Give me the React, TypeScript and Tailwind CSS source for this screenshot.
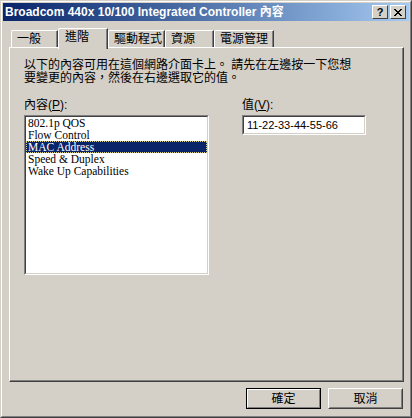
import React from "react";

const items = ["802.1p QOS", "Flow Control", "MAC Address", "Speed & Duplex", "Wake Up Capabilities"];

function Tab({ label, w, selected }: { label: string; w: string; selected?: boolean }) {
  if (selected) {
    return (
      <div className={`${w} h-[21px] -mb-[2px] relative z-10 flex`}>
        <div className="flex-1 border-l border-t border-white rounded-tl-[2px] bg-[#d4d0c8] border-r border-r-[#404040]">
          <div className="h-full border-r border-[#808080] pl-[6px] pt-[1px] leading-[14px] text-[12px]">{label}</div>
        </div>
      </div>
    );
  }
  return (
    <div className={`${w} h-[17px] flex`}>
      <div className="flex-1 border-l border-t border-white rounded-tl-[2px] border-r border-r-[#404040]">
        <div className="h-full border-r border-[#808080] pl-[5px] pt-[1px] leading-[14px] text-[12px]">{label}</div>
      </div>
    </div>
  );
}

export default function App() {
  return (
    <div className="w-[412px] h-[418px] bg-[#d4d0c8] border border-t-[#d4d0c8] border-l-[#d4d0c8] border-r-[#404040] border-b-[#404040] font-['Liberation_Sans','Noto_Sans_CJK_TC',sans-serif] text-black">
      <div className="h-full border border-t-white border-l-white border-r-[#808080] border-b-[#808080] p-[1px] flex flex-col">
        {/* Title bar */}
        <div className="h-[18px] bg-gradient-to-r from-[#0a246a] to-[#a6caf0] flex items-center pl-[2px] pr-[3px]">
          <div className="flex-1 text-white font-bold text-[12px] leading-[14px] whitespace-nowrap">
            Broadcom 440x 10/100 Integrated Controller 內容
          </div>
          <div className="flex gap-[2px]">
            <div className="w-[16px] h-[14px] bg-[#d4d0c8] border border-t-white border-l-white border-r-[#404040] border-b-[#404040] flex items-center justify-center">
              <span className="text-[11px] font-bold leading-[11px] text-black font-['Liberation_Sans',sans-serif]">?</span>
            </div>
            <div className="w-[16px] h-[14px] bg-[#d4d0c8] border border-t-white border-l-white border-r-[#404040] border-b-[#404040] flex items-center justify-center">
              <svg width="8" height="7" viewBox="0 0 8 7" shapeRendering="crispEdges">
                <path d="M0 0h2v1h-2zM6 0h2v1h-2zM1 1h2v1h-2zM5 1h2v1h-2zM2 2h4v1h-4zM3 3h2v1h-2zM2 4h4v1h-4zM1 5h2v1h-2zM5 5h2v1h-2zM0 6h2v1h-2zM6 6h2v1h-2z" fill="#000" />
              </svg>
            </div>
          </div>
        </div>

        {/* Tabs */}
        <div className="mt-[7px] pl-[8px] h-[19px] flex items-end">
          <Tab label="一般" w="w-[47px]" />
          <Tab label="進階" w="w-[50px]" selected />
          <Tab label="驅動程式" w="w-[57px]" />
          <Tab label="資源" w="w-[49px]" />
          <Tab label="電源管理" w="w-[60px]" />
        </div>

        {/* Panel */}
        <div className="ml-[6px] w-[395px] h-[335px] border-l border-t border-white border-r border-b border-r-[#404040] border-b-[#404040]">
          <div className="h-full border-r border-b border-[#808080] pl-[14px] pt-[11px] text-[12px]">
            <div className="whitespace-nowrap">
              <div className="h-[13px] leading-[13px]">以下的內容可用在這個網路介面卡上。 請先在左邊按一下您想</div>
              <div className="h-[13px] leading-[13px]">要變更的內容，然後在右邊選取它的值。</div>
            </div>
            <div className="mt-[14px] flex">
              <div className="w-[185px]">
                <div className="leading-[12px]">
                  內容(<span className="underline">P</span>):
                </div>
                <div className="mt-[4px] h-[160px] border border-t-[#808080] border-l-[#808080] border-r-white border-b-white">
                  <div className="h-full border border-t-[#404040] border-l-[#404040] border-r-[#d4d0c8] border-b-[#d4d0c8] bg-white font-['Liberation_Serif',serif] text-[11.5px]">
                    {items.map((it, i) =>
                      i === 2 ? (
                        <div key={it} className="h-[12px] leading-[12px] bg-[#0a246a] text-white pl-[1px] border border-dotted border-[#d8d080] whitespace-nowrap">
                          <span className="relative -top-[1px]">{it}</span>
                        </div>
                      ) : (
                        <div key={it} className="h-[12px] leading-[12px] pl-[2px] whitespace-nowrap">
                          {it}
                        </div>
                      )
                    )}
                  </div>
                </div>
              </div>
              <div className="ml-[33px] w-[124px]">
                <div className="leading-[12px]">
                  值(<span className="underline">V</span>):
                </div>
                <div className="mt-[4px] h-[20px] border border-t-[#808080] border-l-[#808080] border-r-white border-b-white">
                  <div className="h-full border border-t-[#404040] border-l-[#404040] border-r-[#d4d0c8] border-b-[#d4d0c8] bg-white pl-[3px] text-[11px] leading-[16px] font-['Liberation_Sans',sans-serif]">
                    11-22-33-44-55-66
                  </div>
                </div>
              </div>
            </div>
          </div>
        </div>

        {/* Buttons */}
        <div className="mt-[6px] flex justify-end gap-[7px] pr-[6px]">
          <div className="w-[75px] h-[21px] border border-black">
            <div className="h-full border border-t-white border-l-white border-r-[#808080] border-b-[#808080] flex items-center justify-center text-[12px] leading-[12px]">
              確定
            </div>
          </div>
          <div className="w-[75px] h-[21px] border border-t-white border-l-white border-r-[#404040] border-b-[#404040]">
            <div className="h-full border border-t-[#d4d0c8] border-l-[#d4d0c8] border-r-[#808080] border-b-[#808080] flex items-center justify-center text-[12px] leading-[12px]">
              取消
            </div>
          </div>
        </div>
      </div>
    </div>
  );
}
